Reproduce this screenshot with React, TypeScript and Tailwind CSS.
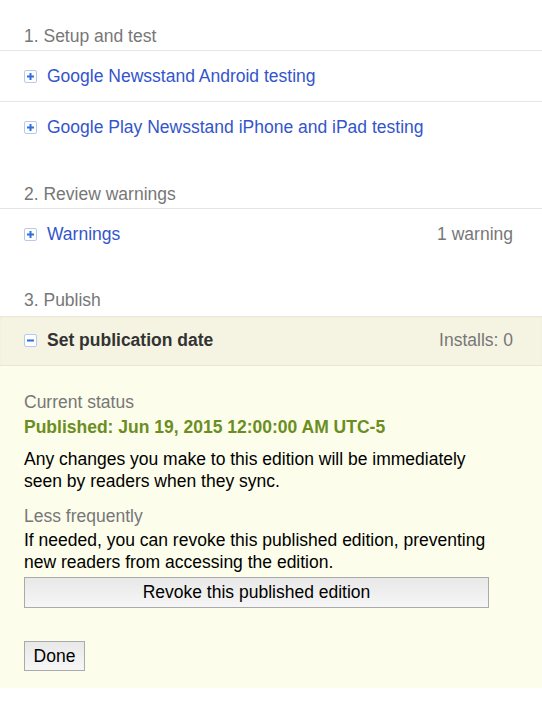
const font = "font-['Liberation_Sans',Arial,sans-serif]";

const ToggleIcon = ({ open = false }: { open?: boolean }) => (
  <span className="mr-[10px] inline-flex h-[13px] w-[13px] shrink-0 items-center justify-center rounded-[2px] border border-[#b9c8f0] bg-white">
    <svg width="9" height="9" viewBox="0 0 9 9">
      <rect x="1" y="3.5" width="7" height="2" fill="#2f6fe0" />
      {!open && <rect x="3.5" y="1" width="2" height="7" fill="#2f6fe0" />}
    </svg>
  </span>
);

const StepTitle = ({ children, className = "" }: { children: string; className?: string }) => (
  <div className={`px-6 text-[17.5px] leading-[20px] text-[#777] ${className}`}>{children}</div>
);

const Row = ({ label, right }: { label: string; right?: string }) => (
  <div className="flex h-[51px] items-center justify-between border-t border-[#e5e5e5] px-6">
    <div className="flex items-center">
      <ToggleIcon />
      <span className="text-[17.5px] text-[#3355cc]">{label}</span>
    </div>
    {right && <span className="pr-[5px] text-[17.5px] text-[#777]">{right}</span>}
  </div>
);

export default function App() {
  return (
    <div className={`${font} min-h-[716px] w-[542px] bg-white pt-[26px]`}>
      <StepTitle>1. Setup and test</StepTitle>
      <div className="mt-[4px]">
        <Row label="Google Newsstand Android testing" />
        <Row label="Google Play Newsstand iPhone and iPad testing" />
      </div>

      <StepTitle className="mt-[32px]">2. Review warnings</StepTitle>
      <div className="mt-[4px]">
        <Row label="Warnings" right="1 warning" />
      </div>

      <StepTitle className="mt-[31px]">3. Publish</StepTitle>

      {/* publication panel */}
      <div className="mt-[6px] bg-[#fdfdeb] pb-[17px]">
        <div className="flex h-[50px] items-center justify-between border-b border-[#e6e6dc] bg-[#f5f4e2] px-6 shadow-[inset_0_1px_2px_rgba(0,0,0,0.06)]">
          <div className="flex items-center">
            <ToggleIcon open />
            <span className="text-[17.5px] font-bold text-[#333]">Set publication date</span>
          </div>
          <span className="pr-[5px] text-[17.5px] text-[#777]">Installs: 0</span>
        </div>

        <div className="px-6 pt-[25px]">
          <div className="text-[17.5px] leading-[22px] text-[#777]">Current status</div>
          <div className="mt-[3px] text-[17.5px] font-bold leading-[22px] text-[#6b8e23]">
            Published: Jun 19, 2015 12:00:00 AM UTC-5
          </div>
          <p className="mt-[10px] w-[470px] text-[17.5px] leading-[22px] text-black">
            Any changes you make to this edition will be immediately seen by readers when they sync.
          </p>
          <div className="mt-[13px] text-[17.5px] leading-[22px] text-[#777]">Less frequently</div>
          <p className="mt-[2px] w-[470px] text-[17.5px] leading-[22px] text-black">
            If needed, you can revoke this published edition, preventing new readers from accessing the edition.
          </p>
          <button className="mt-[4px] h-[31px] w-[465px] border border-[#aaa] bg-gradient-to-b from-[#e8e8e8] to-[#f6f6f6] text-[17.5px] text-black">
            Revoke this published edition
          </button>
          <div className="mt-[33px]">
            <button className="h-[30px] w-[61px] border border-[#aaa] bg-gradient-to-b from-[#e8e8e8] to-[#f6f6f6] text-[17.5px] text-black">
              Done
            </button>
          </div>
        </div>
      </div>
    </div>
  );
}
